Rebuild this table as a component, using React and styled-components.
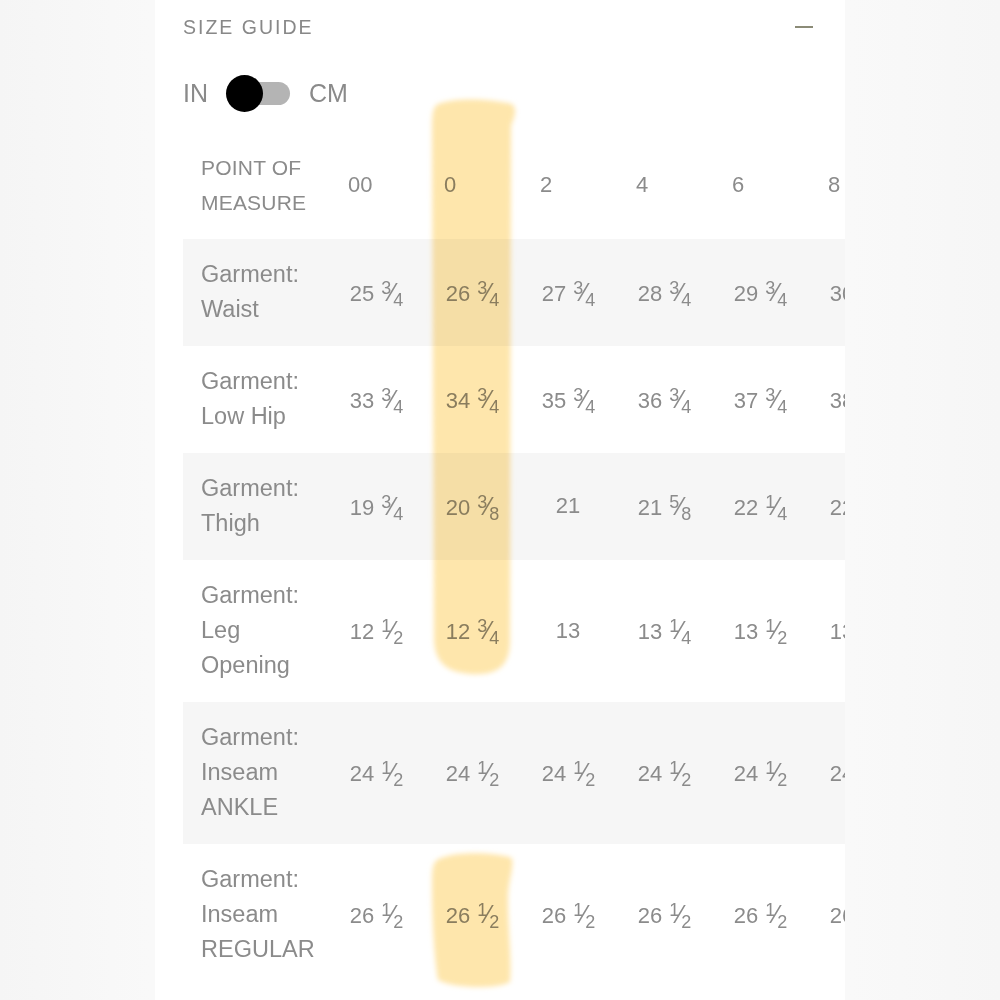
import React from 'react';
import styled, {createGlobalStyle} from 'styled-components';

const GlobalStyle = createGlobalStyle`
	body {
		margin: 0;
		background: #f7f7f7;
		font-family: "Liberation Sans", Arial, sans-serif;
	}
`;

const Page = styled.div`
	display: flex;
	justify-content: center;
	min-height: 1000px;
	background: linear-gradient(90deg, #f5f5f5 0%, #f9f9f9 15%, #f9f9f9 85%, #f6f6f6 100%);
`;

const Panel = styled.div`
	position: relative;
	width: 690px;
	padding-left: 28px;
	box-sizing: border-box;
	background: #fff;
	overflow: hidden;
	color: #8b8b8b;
`;

const Head = styled.div`
	display: flex;
	align-items: center;
	justify-content: space-between;
	height: 54px;
	padding-right: 32px;
`;

const Title = styled.h2`
	margin: 0;
	font-size: 19.5px;
	font-weight: 400;
	letter-spacing: 2px;
	color: #888;
`;

const Minus = styled.span`
	display: block;
	width: 18px;
	height: 2.5px;
	background: #8b8b77;
`;

const UnitRow = styled.div`
	display: flex;
	align-items: center;
	gap: 19px;
	height: 78px;
	font-size: 25px;
	color: #8a8a8a;
`;

const Switch = styled.div`
	position: relative;
	width: 63px;
	height: 37px;
	display: flex;
	align-items: center;
	justify-content: flex-end;
`;

const Track = styled.div`
	width: 50px;
	height: 23px;
	border-radius: 12px;
	background: #b4b4b4;
`;

const Knob = styled.div`
	position: absolute;
	left: -1px;
	top: 0;
	width: 37px;
	height: 37px;
	border-radius: 50%;
	background: #000;
`;

const Row = styled.div`
	display: grid;
	grid-template-columns: 145px repeat(6, 96px);
	align-items: center;
	padding: 18px 0 19px;
	background: ${props => props.shaded ? '#f6f6f6' : 'transparent'};
`;

const Label = styled.div`
	padding-left: 18px;
	font-size: ${props => props.head ? '21px' : '23.5px'};
	line-height: 35px;
	text-transform: ${props => props.head ? 'uppercase' : 'none'};
	letter-spacing: ${props => props.head ? '0.2px' : '0'};
`;

const HeadCell = styled.div`
	padding-left: 20px;
	font-size: 22px;
`;

const Cell = styled.div`
	text-align: center;
	font-size: 22px;
	white-space: nowrap;
`;

const Frac = styled.span`
	display: inline-block;
	margin-left: 7px;
	font-size: 18px;
	letter-spacing: -1px;
	span {
		position: relative;
	}
	.n { top: -7px; }
	.s { font-size: 25px; }
	.d { top: 5px; }
`;

const Marker = styled.svg`
	position: absolute;
	left: 0;
	top: 0;
	pointer-events: none;
	mix-blend-mode: multiply;
`;

const Value = ({v}) => {
	const [whole, frac] = v.split(' ');
	if (!frac) return <Cell>{whole}</Cell>;
	const [n, d] = frac.split('/');
	return (
		<Cell>
			{whole}
			<Frac><span className="n">{n}</span><span className="s">⁄</span><span className="d">{d}</span></Frac>
		</Cell>
	);
};

const sizes = ['00', '0', '2', '4', '6', '8'];

const rows = [
	{label: ['Garment:', 'Waist'], values: ['25 3/4', '26 3/4', '27 3/4', '28 3/4', '29 3/4', '30 3/4']},
	{label: ['Garment:', 'Low Hip'], values: ['33 3/4', '34 3/4', '35 3/4', '36 3/4', '37 3/4', '38 3/4']},
	{label: ['Garment:', 'Thigh'], values: ['19 3/4', '20 3/8', '21', '21 5/8', '22 1/4', '22 7/8']},
	{label: ['Garment:', 'Leg', 'Opening'], values: ['12 1/2', '12 3/4', '13', '13 1/4', '13 1/2', '13 3/4']},
	{label: ['Garment:', 'Inseam', 'ANKLE'], values: ['24 1/2', '24 1/2', '24 1/2', '24 1/2', '24 1/2', '24 1/2']},
	{label: ['Garment:', 'Inseam', 'REGULAR'], values: ['26 1/2', '26 1/2', '26 1/2', '26 1/2', '26 1/2', '26 1/2']},
];

function App() {
	return (
		<Page>
			<GlobalStyle/>
			<Panel>
				<Head>
					<Title>SIZE GUIDE</Title>
					<Minus/>
				</Head>
				<UnitRow>
					<span>IN</span>
					<Switch>
						<Track/>
						<Knob/>
					</Switch>
					<span>CM</span>
				</UnitRow>
				<Row>
					<Label head>Point of<br/>Measure</Label>
					{sizes.map(s => <HeadCell key={s}>{s}</HeadCell>)}
				</Row>
				{rows.map((r, i) => (
					<Row key={i} shaded={i % 2 === 0}>
						<Label>{r.label.map((l, j) => <div key={j}>{l}</div>)}</Label>
						{r.values.map((v, j) => <Value key={j} v={v}/>)}
					</Row>
				))}
				<Marker width="690" height="1000" viewBox="155 0 690 1000">
					<defs>
						<filter id="soft" x="-20%" y="-20%" width="140%" height="140%">
							<feGaussianBlur stdDeviation="2.5"/>
						</filter>
					</defs>
					<g fill="#fee6ac" filter="url(#soft)">
						<path d="M438,104 C456,97 492,99 512,104 C518,109 514,118 511,126 L510,640 C510,664 500,676 470,674 C446,672 435,662 434,640 L432,130 C432,113 433,107 438,104 Z"/>
						<path d="M437,860 C452,851 495,852 512,858 C514,870 508,880 508,900 C508,930 512,960 510,982 C495,990 452,988 438,980 C433,950 432,905 432,882 C432,869 433,863 437,860 Z"/>
					</g>
				</Marker>
			</Panel>
		</Page>
	);
}

export default App;
